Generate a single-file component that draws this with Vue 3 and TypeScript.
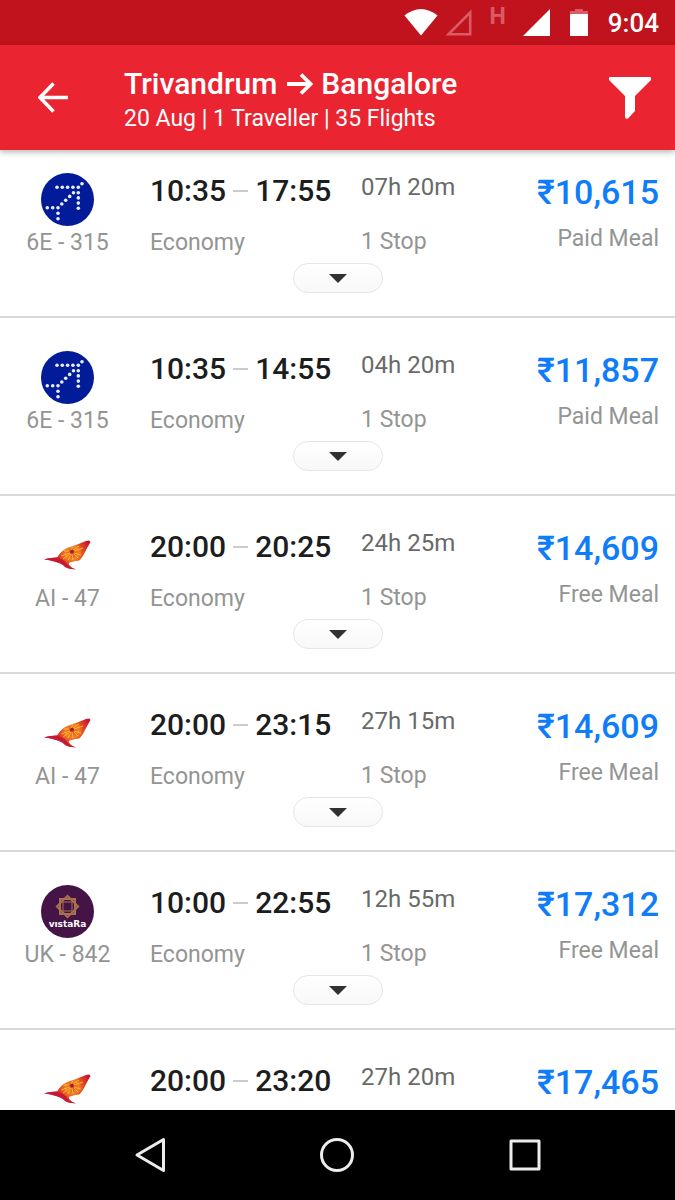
<script setup lang="ts">
type Carrier = 'indigo' | 'airindia' | 'vistara'

interface Flight {
  carrier: Carrier
  code: string
  departs: string
  arrives: string
  duration: string
  price: string
  meal: string
}

const flights: Flight[] = [
  { carrier: 'indigo', code: '6E - 315', departs: '10:35', arrives: '17:55', duration: '07h 20m', price: '₹10,615', meal: 'Paid Meal' },
  { carrier: 'indigo', code: '6E - 315', departs: '10:35', arrives: '14:55', duration: '04h 20m', price: '₹11,857', meal: 'Paid Meal' },
  { carrier: 'airindia', code: 'AI - 47', departs: '20:00', arrives: '20:25', duration: '24h 25m', price: '₹14,609', meal: 'Free Meal' },
  { carrier: 'airindia', code: 'AI - 47', departs: '20:00', arrives: '23:15', duration: '27h 15m', price: '₹14,609', meal: 'Free Meal' },
  { carrier: 'vistara', code: 'UK - 842', departs: '10:00', arrives: '22:55', duration: '12h 55m', price: '₹17,312', meal: 'Free Meal' },
  { carrier: 'airindia', code: 'AI - 47', departs: '20:00', arrives: '23:20', duration: '27h 20m', price: '₹17,465', meal: 'Free Meal' },
]

const indigoDots: [number, number][] = [
  [16, 14.3], [21.3, 14.3], [26.6, 14.3], [31.9, 14.3], [37.3, 14.3], [41, 10.7],
  [37.3, 19.7], [37.3, 24.9], [37.3, 30.1], [37.3, 35.3], [32.5, 19.7], [28.7, 23.4],
  [24.7, 27.3], [20.8, 31], [17, 34.7], [11.7, 34.7], [6.3, 34.7], [17, 40.2], [17, 45.7],
]
</script>

<template>
  <div class="screen">
    <div class="status">
      <svg class="wifi" width="34" height="27" viewBox="0 0 34 27" aria-hidden="true">
        <path d="M.5 6.500Q17-6.500 33.500 6.500L17 26.500Z" fill="#fff" />
      </svg>
      <svg class="sim" width="27" height="27" viewBox="0 0 27 27" aria-hidden="true">
        <path d="M3.500 25.200H25.200V3.500Z" fill="none" stroke="#da5b63" stroke-width="2.600" />
      </svg>
      <span class="network">H</span>
      <svg class="signal" width="27" height="27" viewBox="0 0 27 27" aria-hidden="true">
        <path d="M0 27H27V0Z" fill="#fff" />
      </svg>
      <svg class="battery" width="18" height="27" viewBox="0 0 18 27" aria-hidden="true">
        <path d="M0 5V2H5V0H13V2H18V5Z" fill="#da5b63" />
        <path d="M0 5H18V27H0Z" fill="#fff" />
      </svg>
      <time>9:04</time>
    </div>

    <header class="bar">
      <button class="icon-button" type="button" aria-label="Back">
        <svg width="31" height="31" viewBox="0 0 31 31">
          <path d="M15.500 1.500L2 15.500L15.500 29.500M2 15.500H30" fill="none" stroke="#fff" stroke-width="3.600" />
        </svg>
      </button>
      <div class="route">
        <h1>
          Trivandrum
          <svg class="to" width="28" height="22" viewBox="0 0 28 22" role="img" aria-label="to">
            <path d="M2 11H25M16 1.500L25.500 11L16 20.500" fill="none" stroke="#fff" stroke-width="3.800" />
          </svg>
          Bangalore
        </h1>
        <p>20 Aug | 1 Traveller | 35 Flights</p>
      </div>
      <button class="icon-button" type="button" aria-label="Filter">
        <svg width="42" height="42" viewBox="0 0 42 42">
          <path d="M1 0H41Q42 0 42 1V3L26 19V34L19 41.500Q16 42.500 16 40V19L0 3V1Q0 0 1 0Z" fill="#fff" />
        </svg>
      </button>
    </header>

    <main class="list">
      <article v-for="(f, i) in flights" :key="i" class="flight">
        <div class="facts">
          <div class="airline">
            <svg v-if="f.carrier === 'indigo'" width="53" height="53" viewBox="0 0 53 53" role="img" aria-label="IndiGo">
              <circle cx="26.500" cy="26.500" r="26.500" fill="#021b98" />
              <circle v-for="(d, n) in indigoDots" :key="n" :cx="d[0]" :cy="d[1]" r="1.800" fill="#e9f0ff" />
            </svg>
            <svg v-else-if="f.carrier === 'airindia'" width="53" height="53" viewBox="0 0 53 53" role="img" aria-label="Air India">
              <defs>
                <radialGradient :id="'wing' + i" gradientUnits="userSpaceOnUse" cx="31" cy="24" r="19">
                  <stop offset="0" stop-color="#e0481f" />
                  <stop offset=".35" stop-color="#ef8427" />
                  <stop offset=".6" stop-color="#e2481f" />
                  <stop offset="1" stop-color="#c8142f" />
                </radialGradient>
              </defs>
              <path d="M3 30.300Q10 28.500 16 28.500Q20 22 26 19Q37 15.500 45 12Q49 10.500 49.500 13Q46 19 43.500 24Q40 31 37.500 31.800Q35 31.500 31 33Q27 33 28 35.500Q30 39 35 40.300Q26 40.500 22 36Q18 33 3 30.300Z" :fill="`url(#wing${i})`" />
              <path d="M3 30.300Q10 28.500 16 28.500Q22 30 25 33.500Q28 39 35 40.300Q26 40.500 22 36Q18 33 3 30.300Z" fill="#c71934" />
              <path d="M29 24L20 27M29 25L22 30M30 25L27 31M31 25L32 31M33 25L37 29M33 24L40 26M33 22L42 19M32 21L38 17M30 21L32 18M28 22L23 22" stroke="#ffc53a" stroke-width=".8" />
              <circle cx="31" cy="22.500" r="1.800" fill="#9c1e28" />
            </svg>
            <svg v-else width="53" height="53" viewBox="0 0 53 53" role="img" aria-label="Vistara">
              <circle cx="26.500" cy="26.500" r="26.500" fill="#451447" />
              <g fill="none" stroke="#a9714f" stroke-width="2">
                <rect x="19" y="14" width="15" height="15" />
                <rect x="19" y="14" width="15" height="15" transform="rotate(45 26.500 21.500)" />
              </g>
              <rect x="22" y="17" width="9" height="9" fill="#451447" stroke="#a9714f" />
              <text x="26.500" y="42" text-anchor="middle" class="brand">vıstaRa</text>
            </svg>
            <span class="code">{{ f.code }}</span>
          </div>
          <div class="times">
            <div class="clock">
              <time>{{ f.departs }}</time><span class="dash"></span><time>{{ f.arrives }}</time>
            </div>
            <span class="cabin">Economy</span>
          </div>
          <div class="travel">
            <span class="duration">{{ f.duration }}</span>
            <span class="stops">1 Stop</span>
          </div>
          <div class="fare">
            <strong class="price">{{ f.price }}</strong>
            <span class="meal">{{ f.meal }}</span>
          </div>
        </div>
        <button class="more" type="button" aria-label="Show flight details">
          <svg width="18" height="9" viewBox="0 0 18 9"><path d="M0 0H18L9 9Z" fill="#303331" /></svg>
        </button>
      </article>
    </main>

    <nav class="system">
      <button type="button" aria-label="Back">
        <svg width="36" height="36" viewBox="0 0 36 36"><path d="M31.500 2.500V33.500L5 18Z" /></svg>
      </button>
      <button type="button" aria-label="Home">
        <svg width="36" height="36" viewBox="0 0 36 36"><circle cx="18" cy="18" r="15.500" /></svg>
      </button>
      <button type="button" aria-label="Recent apps">
        <svg width="36" height="36" viewBox="0 0 36 36"><rect x="4" y="4" width="28" height="28" /></svg>
      </button>
    </nav>
  </div>
</template>

<style>
body {
  margin: 0;
}
</style>

<style scoped>
.screen {
  display: flex;
  flex-direction: column;
  height: 100vh;
  background: #fff;
  font-family: Roboto, "Noto Sans", sans-serif;
}

button {
  padding: 0;
  border: 0;
  background: none;
  cursor: pointer;
}

svg {
  display: block;
}

.status {
  display: flex;
  flex: none;
  align-items: center;
  justify-content: flex-end;
  height: 45px;
  padding-right: 16px;
  color: #fff;
  background: #c0131d;
}

.sim {
  margin-left: 7px;
}

.network {
  margin: 0 17px 12px 18px;
  color: #da5b63;
  font-size: 23px;
  font-weight: 700;
  line-height: 22px;
}

.battery {
  margin: 0 20px;
}

.status time {
  font-size: 26px;
  font-weight: 500;
  line-height: 30px;
}

.bar {
  z-index: 1;
  display: flex;
  flex: none;
  align-items: center;
  height: 105px;
  padding: 0 24px 0 38px;
  color: #fff;
  background: #ea2430;
  box-shadow: 0 2px 6px rgba(0, 0, 0, 0.3);
}

.route {
  flex: 1;
  margin-left: 55px;
}

h1 {
  display: flex;
  gap: 8px;
  align-items: center;
  margin: 0;
  padding-top: 3px;
  font-size: 30px;
  font-weight: 500;
  line-height: 40px;
}

.route p {
  margin: 0;
  font-size: 23px;
  line-height: 30px;
}

.list {
  flex: 1;
  min-height: 0;
  overflow-y: auto;
  scrollbar-width: none;
}

.flight {
  padding: 33px 0 23px;
  border-bottom: 2px solid #d9d9d9;
}

.flight:first-child {
  padding-top: 23px;
}

.facts {
  display: grid;
  grid-template-columns: 135px 211px 1fr auto;
  padding-right: 16px;
}

.airline,
.times,
.travel,
.fare {
  display: flex;
  flex-direction: column;
}

.airline {
  align-items: center;
}

.times,
.travel {
  padding-left: 15px;
}

.fare {
  align-items: flex-end;
}

.code,
.cabin,
.stops,
.meal {
  color: #939593;
  font-size: 23px;
  line-height: 28px;
}

.code {
  margin-top: 3px;
}

.clock {
  display: flex;
  align-items: center;
  color: #1c1e1d;
  font-size: 30px;
  font-weight: 500;
  line-height: 36px;
}

.dash {
  width: 15px;
  height: 2px;
  margin: 0 7px;
  background: #ccc;
}

.cabin {
  margin-top: 20px;
}

.duration {
  color: #686a68;
  font-size: 24px;
  line-height: 28px;
}

.stops {
  margin-top: 27px;
}

.price {
  color: #0f7cf9;
  font-size: 34px;
  font-weight: 500;
  line-height: 38px;
}

.meal {
  margin-top: 14px;
}

.more {
  display: flex;
  align-items: center;
  justify-content: center;
  box-sizing: border-box;
  width: 90px;
  height: 30px;
  margin: 6px auto 0;
  border: 1px solid #e6e6e6;
  border-radius: 15px;
  background: linear-gradient(#fff, #f8f8f8);
}

.brand {
  fill: #fff;
  font-family: "DejaVu Sans", sans-serif;
  font-size: 9px;
  font-weight: 700;
}

.system {
  display: grid;
  flex: none;
  grid-template-columns: repeat(3, 1fr);
  height: 90px;
  padding: 0 56px;
  background: #000;
}

.system button {
  display: flex;
  align-items: center;
  justify-content: center;
}

.system svg {
  fill: none;
  stroke: #ececec;
  stroke-width: 3px;
  stroke-linejoin: round;
}
</style>
